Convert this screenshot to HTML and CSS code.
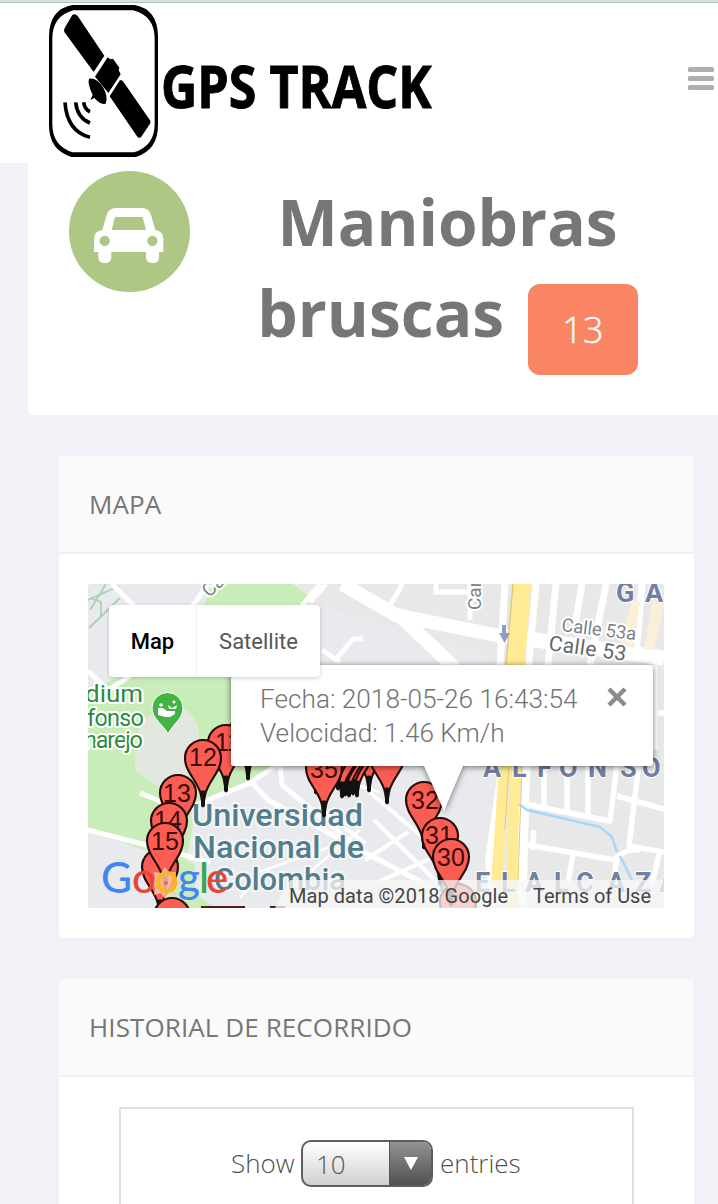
FILE: index.html
```html
<!DOCTYPE html>
<html lang="es">
<head>
<meta charset="utf-8">
<title>GPS Track</title>
<link rel="stylesheet" href="styles.css">
</head>
<body>
<header class="topbar">
  <svg class="logo" viewBox="57 15 1155 456" role="img" aria-label="GPS Track">
    <rect x="62" y="22" width="317" height="442" rx="66" ry="76" fill="#fff"/>
    <path fill-rule="evenodd" d="M127 15H314Q384 28 384 110V376Q384 450 318 471H124Q57 450 57 376V110Q57 28 127 15ZM130 31Q67 48 67 116V372Q67 438 128 457H312Q374 438 374 372V116Q374 48 310 31Z"/>
    <path d="M127 45Q135 39 143 48L223 167L191 216L103 96Q101 90 104 84Z"/>
    <path d="M233 172L241 178L249 176L268 203L266 211L272 223L235 279L195 230Z"/>
    <path d="M270 240L278 242L361 362Q363 368 358 374L333 412Q328 416 322 410L239 289Z"/>
    <path d="M177 236Q200 232 220 263Q235 290 227 311Q214 315 203 304L193 294L181 300L188 284Q172 252 177 236Z"/>
    <g fill="none" stroke="#000" stroke-width="11"><path d="M161 307Q164 329 180 335"/><path d="M137 307Q142 354 180 369"/><path d="M105 307Q111 394 180 412"/></g>
    <text class="logo-text" x="393" y="324" textLength="812" lengthAdjust="spacingAndGlyphs">GPS TRACK</text>
  </svg>
  <div class="menu"><i></i><i></i><i></i></div>
</header>

<section class="hero">
  <svg class="car" viewBox="57 33 363 363">
    <circle cx="238.500" cy="214.500" r="181.500" fill="#aec785"/>
    <path fill="#fff" fill-rule="evenodd" d="M198 144H276Q297 144 303 165L316 210Q340 213 340 236V276H327V290Q327 309 308 309Q288 309 288 290V276H184V290Q184 309 164 309Q145 309 145 290V276H132V236Q132 213 157 210L170 165Q176 144 198 144ZM195 171L185 210H288L278 171ZM164 227A15.500 15.500 0 1 0 164 258A15.500 15.500 0 1 0 164 227ZM307 227A15.500 15.500 0 1 0 307 258A15.500 15.500 0 1 0 307 227Z"/>
  </svg>
  <h1 class="title">Maniobras<br>bruscas <span class="count">13</span></h1>
</section>

<section class="card">
  <h2 class="card-head">MAPA</h2>
  <div class="map">
    <svg class="canvas" viewBox="88 584 576 324">
      <defs>
        <g id="pin"><path d="M0 66L-2 54C-5 40 -18 31 -18 17A18 18 0 0 1 18 17C18 31 5 40 2 54Z" fill="#fb5d53" stroke="#240b0a" stroke-width="2.200"/><path d="M-1.500 50L-1.500 65H1.500V50Z" fill="#111" stroke="#111"/></g>
      </defs>
      <rect x="88" y="584" width="576" height="324" fill="#e8eaed"/>
      <path d="M440 584H664V908H500L530 760L500 660L300 600V584Z" fill="#e8e8e9"/>
      <path d="M212 584H293L312 598L300 612V665H180Z" fill="#c9edb9"/>
      <path d="M88 750V690L125 675H235V787L196 806L186 865L88 830Z" fill="#c9edb9"/>
      <path d="M230 765H280L230 790ZM153 866L170 853L195 864V892L214 908H185L153 884Z" fill="#c9edb9"/>
      <path d="M135 754L140 722Q160 706 187 710Q201 723 199 741L188 775L160 788L135 770Z" fill="#e2e7e0"/>
      <g fill="none" stroke="#a9d3ae" stroke-width="1.800"><path d="M88 600L119 586M89 628L120 598M106 584L90 610M90 598L101 602V618"/></g>
      <g fill="none" stroke="#fff" stroke-linejoin="round">
        <path d="M112 584L140 612M208 584L190 610M88 671L108 690L130 676M320 584L300 608M88 830L150 846L210 862M140 793L162 802M195 805L250 783L281 762M250 780L268 800L360 850L450 897M280 765L282 785L360 850" stroke-width="5"/>
        <path d="M310 602L326 584M322 650L340 662M337 658L353 639H363M390 605L398 592L402 584M435 592L470 592M436 584V595M470 584V620" stroke-width="5"/>
        <path d="M342 584L396 615L505 637M400 616L455 668" stroke-width="14"/>
        <path d="M500 635L664 658" stroke-width="15"/>
        <path d="M505 584L500 666M536 584L529 660L523 908M556 584L548 665M582 584L575 625M606 584L590 665M642 584L636 655" stroke-width="7"/>
        <path d="M503 765L489 860L494 908M527 765L516 900" stroke-width="8"/>
        <path d="M520 803L610 821L617 765M544 765V806M567 765V811M588 765V817M617 796L664 809M640 755L629 846L664 852M516 843L615 860Q625 848 640 850M534 830L532 850M573 854L568 883M617 855L613 888M660 850L652 885M655 665V750M655 713H664" stroke-width="5.500"/>
        <path d="M367 790L432 845M374 820L438 883M365 860L408 832M378 882L432 858M365 843L345 828" stroke-width="4"/>
        <path d="M225 884L350 840M240 897L270 870M300 880L360 830M345 782L380 792" stroke-width="2.500"/>
      </g>
      <path d="M514 584H531L525 665H507Z" fill="#ffeb93"/><path d="M513 584L506 665" stroke="#e6c96f" stroke-width="1.500"/>
      <path d="M499 765H509L505 840L503 885H491ZM510 765H522L519 805L517 908H505Z" fill="#ffeb93"/>
      <path d="M522 765L518 880M509 767L505 830" stroke="#e6c96f" fill="none"/>
      <path d="M632 600L640 602L634 648L621 645ZM653 600L664 605L654 650L644 649Z" fill="#fbefd8"/>
      <path d="M519 804L527 810L600 827L612 837L617 852M620 856L632 880" fill="none" stroke="#a8d8f8" stroke-width="2.500"/>
      <path d="M502 625H506V633H510L504.500 643L499 633H502Z" fill="#8d9dc3"/>

      <g class="outlined place">
        <text x="192" y="826" textLength="171" lengthAdjust="spacingAndGlyphs">Universidad</text>
        <text x="193" y="858" textLength="171" lengthAdjust="spacingAndGlyphs">Nacional de</text>
        <text x="214" y="890" textLength="132" lengthAdjust="spacingAndGlyphs">Colombia</text>
      </g>
      <g class="outlined park">
        <text x="85" y="702" textLength="58" lengthAdjust="spacingAndGlyphs">dium</text>
        <text x="87" y="726" textLength="57">fonso</text>
        <text x="84" y="748" textLength="59">narejo</text>
      </g>
      <path d="M168 734C163 724 152 719 152 708A15.500 15.500 0 0 1 183 708C183 719 173 724 168 734Z" fill="#43b345" stroke="#fff"/>
      <path d="M158 708H163L167 711H175V714L170 717H165L158 715ZM168 705L172 708L177 705L176 709H169Z" fill="#fff"/><circle cx="161" cy="705" r="1.800" fill="#fff"/><circle cx="174" cy="702" r="1.500" fill="#fff"/>
      <g class="outlined street">
        <text transform="translate(209 598) rotate(-42)">Ca</text>
        <text transform="translate(481 610) rotate(-90)">Carrera</text>
        <text transform="translate(561 631) rotate(7)" textLength="75" class="small">Calle 53a</text>
        <text transform="translate(548 650) rotate(8)" textLength="78" class="strong">Calle 53</text>
        <text x="82" y="650">.</text>
      </g>
      <g class="outlined district">
        <text x="616" y="602">G</text><text x="645" y="602">A</text>
        <text x="483 512 537 559 588 620 642" y="777">ALFONSO</text>
        <text x="438 475 501 525 554 576 607 635 659" y="892">BELALCAZA</text>
      </g>

      <g class="pins">
        <use href="#pin" x="248" y="714"/><use href="#pin" x="226" y="726"/><text x="228" y="751">11</text>
        <use href="#pin" x="203" y="741"/><text x="203" y="766">12</text>
        <use href="#pin" x="178" y="776"/><text x="177" y="802">13</text>
        <use href="#pin" x="169" y="804"/><text x="168" y="829">14</text>
        <use href="#pin" x="160" y="850"/><use href="#pin" x="165" y="824"/><text x="165" y="850">15</text>
        <use href="#pin" x="172" y="899"/>
        <use href="#pin" x="316" y="728"/><use href="#pin" x="369" y="726"/><use href="#pin" x="357" y="731"/><use href="#pin" x="353" y="729"/><use href="#pin" x="349" y="731"/><use href="#pin" x="345" y="730"/><use href="#pin" x="342" y="732"/><use href="#pin" x="338" y="724"/><use href="#pin" x="387" y="738"/>
        <use href="#pin" x="324" y="751"/><text x="324" y="778">35</text>
        <use href="#pin" x="424" y="783"/><text x="425" y="809">32</text>
        <use href="#pin" x="440" y="819"/><text x="439" y="844">31</text>
        <use href="#pin" x="458" y="885"/><use href="#pin" x="451" y="840"/><text x="451" y="866">30</text>
        <path d="M201 907H245M270 907H285" stroke="#571d1a" stroke-width="2"/>
      </g>
      <path d="M290 880H664V908H275Z" fill="#f7f7f7" opacity=".76"/>
      <path d="M165 867L169 873L176 872L175 879L181 883L175 888L176 895L169 893L165 899L161 893L154 895L155 888L149 883L155 879L154 872L161 873Z" fill="#ffc5ae" opacity=".85"/>
      <g class="google"><text x="101" y="893" fill="#4285f4" textLength="31" lengthAdjust="spacingAndGlyphs">G</text><text x="132" y="893" fill="#ea4335">o</text><text x="155" y="893" fill="#f9b51b">o</text><text x="178" y="893" fill="#4285f4">g</text><text x="199" y="893" fill="#34a853">l</text><text x="206" y="893" fill="#ea4335">e</text></g>
      <circle cx="166" cy="883" r="2" fill="#ef6550"/>
      <g class="legal"><text x="289" y="903" textLength="219">Map data ©2018 Google</text><text x="533" y="903" textLength="118">Terms of Use</text></g>
      <g class="bubble"><path d="M234 665H650Q653 665 653 668V763Q653 766 650 766H463L444 811L424 766H234Q231 766 231 763V668Q231 665 234 665Z" fill="#fff"/></g>
    </svg>
    <div class="info">
      <p class="info-text">Fecha: 2018-05-26 16:43:54<br><span class="speed">Velocidad: 1.46 Km/h</span></p>
      <svg class="close" viewBox="0 0 20 20"><path d="M2 2L18 18M18 2L2 18" stroke="#8c8c8c" stroke-width="4.500"/></svg>
    </div>
    <div class="types"><span class="type active">Map</span><span class="type">Satellite</span></div>
  </div>
</section>

<section class="card history">
  <h2 class="card-head">HISTORIAL DE RECORRIDO</h2>
  <div class="table-box">
    <div class="length"><span class="show">Show</span><span class="select"><span class="value">10</span><span class="arrow"><svg viewBox="0 0 14 13"><path d="M0 0H14L7 13Z" fill="#fff"/></svg></span></span><span class="entries">entries</span></div>
  </div>
</section>
</body>
</html>
```
FILE: styles.css
```css
* { box-sizing: border-box; }
html { overflow: hidden; }
body { margin: 0; width: 718px; height: 1204px; overflow: hidden; background: #f1f1f7; color: #767676; font-family: "Open Sans", sans-serif; }
.topbar { display: flex; justify-content: space-between; align-items: flex-start; height: 163px; padding: 2px 4px 0 49px; background: #fff; border-top: 2px solid #d6e2da; box-shadow: inset 0 1px #b5c2b9; }
.logo { width: 385px; height: 152px; margin-top: 1px; }
.logo-text { font: 700 179px "Open Sans", sans-serif; stroke: #000; stroke-width: 3px; }
.menu { display: flex; flex-direction: column; gap: 4px; width: 26px; margin-top: 63px; }
.menu i { height: 5px; border-radius: 1.500px; background: #afafaf; }

.hero { display: flex; align-items: flex-start; height: 252px; margin-left: 28px; padding: 8px 52px 0 41px; background: #fff; border-radius: 0 0 0 5px; }
.car { flex: none; width: 121px; height: 121px; }
.title { flex: 1; margin: 5px 0 0 39px; font-size: 64px; line-height: 91px; font-weight: 700; text-align: center; white-space: nowrap; }
.count { display: inline-block; width: 110px; height: 91px; margin-left: 7px; border-radius: 12px; background: #fa8564; color: #fff; font-size: 36.500px; font-weight: 300; line-height: 91px; vertical-align: top; margin-top: 17px; -webkit-text-stroke: .4px #fff; }

.card { width: 635px; height: 482px; margin: 41px 0 0 59px; border-radius: 5px; background: #fff; overflow: hidden; }
.card.history { height: 225px; border-radius: 5px 5px 0 0; }
.card-head { height: 98px; margin: 0; padding-left: 30px; background: #fafafa; border-bottom: 2px solid #f0f0f5; font-size: 26px; line-height: 97px; font-weight: 400; letter-spacing: .1px; }
.map { position: relative; width: 576px; height: 324px; margin: 30px 0 0 29px; overflow: hidden; border-radius: 3px; }
.canvas { display: block; width: 576px; height: 324px; }
.outlined { font-family: Roboto, sans-serif; paint-order: stroke; stroke: #fff; stroke-width: 4px; stroke-linejoin: round; }
.place { font-size: 31px; font-weight: 500; fill: #537c8c; stroke: #f4f7f7; }
.park { font-size: 23.500px; font-weight: 400; fill: #2d8a3e; }
.street { font-size: 19px; fill: #7d8287; }
.small { font-size: 18.500px; }
.strong { font-size: 21px; fill: #62676b; }
.district { font-size: 27px; font-weight: 700; fill: #7180a0; stroke-width: 2px; }
.pins text { font: 25px "Liberation Sans", sans-serif; text-anchor: middle; fill: #3a0b09; }
.google { font: 500 42px Lato, sans-serif; }
.legal { font: 20px Roboto, sans-serif; fill: #444; }
.bubble { filter: drop-shadow(0 1px 3px rgba(0, 0, 0, .55)); }
.info { position: absolute; left: 143px; top: 81px; width: 422px; height: 101px; display: flex; justify-content: space-between; padding: 17px 26px 0 29px; }
.info-text { margin: 0; font: 300 26.200px/34px Roboto, sans-serif; color: #737373; white-space: nowrap; }
.close { width: 20px; height: 20px; margin-top: 5px; }
.types { position: absolute; left: 21px; top: 21px; display: flex; height: 72px; border-radius: 4px; background: #fff; box-shadow: 0 1px 4px rgba(0, 0, 0, .2); font: 22px/73px Roboto, sans-serif; text-align: center; }
.type { width: 123px; color: #565656; }
.type.active { width: 88px; color: #000; font-weight: 500; border-right: 1px solid #eee; }

.table-box { width: 515px; height: 97px; margin: 30px 0 0 60px; padding-top: 30px; border: 2px solid #dfdfdf; border-bottom: 0; }
.length { display: flex; align-items: center; padding-left: 110px; font-size: 26px; line-height: 48px; font-weight: 300; color: #505050; }
.show { width: 70px; }
.select { display: flex; width: 132px; height: 47px; border: 2px solid #5e5e5e; border-radius: 10px; overflow: hidden; background: linear-gradient(#fff, #d0d0d0); }
.value { flex: 1; padding-left: 13px; line-height: 44px; color: #555; }
.arrow { display: flex; align-items: center; justify-content: center; width: 42px; background: linear-gradient(#929292, #515151); border-left: 1px solid #555; }
.arrow svg { width: 14px; height: 13px; }
.entries { margin-left: 7px; }
```
